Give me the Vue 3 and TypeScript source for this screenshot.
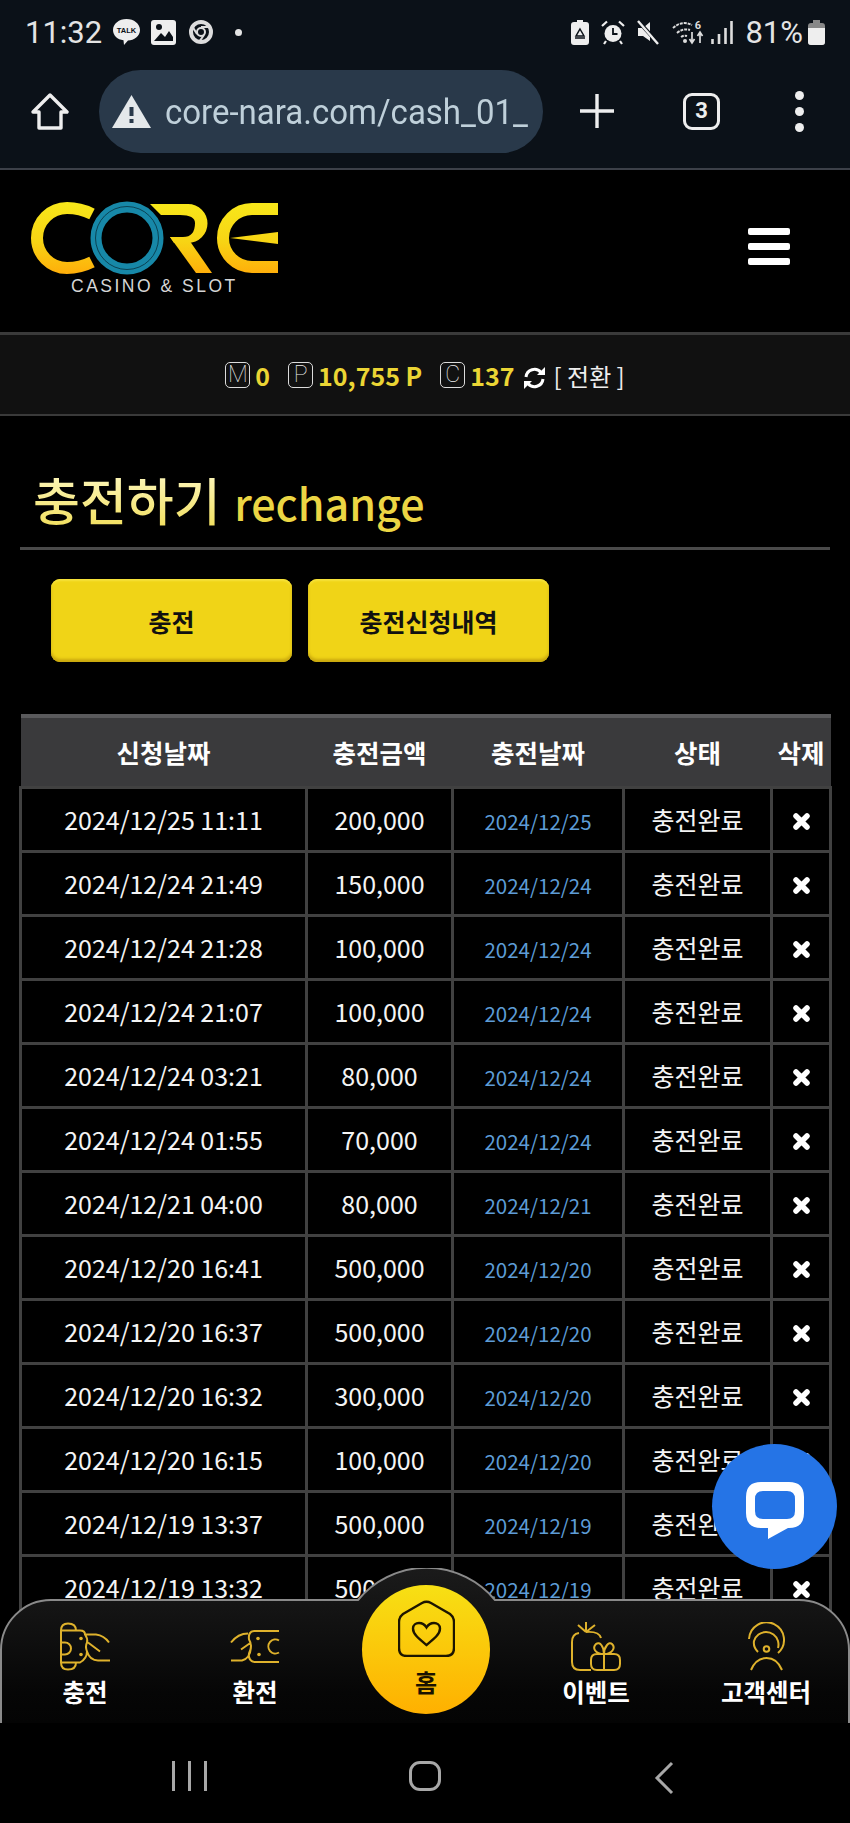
<template>
  <div class="page">
    <!-- phone status bar -->
    <div class="status">
      <span class="time">11:32</span>
      <svg class="st talk" width="29" height="28" viewBox="0 0 29 28">
        <path d="M14.500 1C22 1 28 5.800 28 12C28 18 22 22.500 16 22.500L12 27L11.500 22.300C5.500 21.500 1 17.500 1 12C1 5.800 7 1 14.500 1Z" fill="#eee" />
        <text x="14.500" y="15" text-anchor="middle" class="talk-text">TALK</text>
      </svg>
      <svg class="st pic" width="25" height="25" viewBox="0 0 25 25">
        <rect x="0" y="0" width="25" height="25" rx="3" fill="#eee" />
        <circle cx="8" cy="7" r="3" fill="#0b1118" />
        <path d="M3 21L10 13L14 17L18 11L22 17V21Z" fill="#0b1118" />
      </svg>
      <svg class="st chrome" width="24" height="24" viewBox="0 0 24 24">
        <circle cx="12" cy="12" r="10" fill="none" stroke="#ddd" stroke-width="4" />
        <circle cx="12" cy="12" r="4" fill="none" stroke="#ddd" stroke-width="2" />
        <path d="M12 7H22M8 14L3 6M15 15L10 22" stroke="#ddd" stroke-width="2" />
      </svg>
      <i class="st-dot"></i>
      <span class="st-fill"></span>
      <svg class="st" width="18" height="25" viewBox="0 0 18 25">
        <path d="M6 0H12V2H15Q18 2 18 5V22Q18 25 15 25H3Q0 25 0 22V5Q0 2 3 2H6Z" fill="#eee" />
        <path d="M9 9L13 16H5ZM4 18H14" fill="none" stroke="#0b1118" stroke-width="1.500" />
      </svg>
      <svg class="st gap-r" width="24" height="25" viewBox="0 0 24 25">
        <circle cx="12" cy="13.500" r="8.500" fill="#eee" />
        <path d="M12 8V14H16.500" fill="none" stroke="#0b1118" stroke-width="1.800" />
        <path d="M1 6L6 1.500M23 6L18 1.500M5 21L3 24M19 21L21 24" stroke="#eee" stroke-width="2.200" />
      </svg>
      <svg class="st gap-r" width="23" height="25" viewBox="0 0 23 25">
        <path d="M1 8H6L13 2V21L6 16H1Z" fill="#eee" />
        <path d="M2 2L22 24" stroke="#0b1118" stroke-width="4" />
        <path d="M1 1L21 24" stroke="#eee" stroke-width="2.400" />
      </svg>
      <svg class="st gap-r" width="32" height="25" viewBox="0 0 32 25">
        <path d="M1 8Q10 0 20 5M5 13Q11 8 18 10M9 17Q12 15 15 16" fill="none" stroke="#ddd" stroke-width="2" stroke-dasharray="3 1" />
        <circle cx="13" cy="21" r="2" fill="#ddd" />
        <text x="26" y="9" text-anchor="middle" class="wifi-six">6</text>
        <path d="M20 12V22M17.500 19L20 23L22.500 19M28 23V13M25.500 16L28 12L30.500 16" fill="none" stroke="#ddd" stroke-width="1.700" />
      </svg>
      <svg class="st gap-s" width="22" height="25" viewBox="0 0 22 25">
        <path d="M1.500 19V24M8 14V24M14.500 8V24M20.500 1V24" stroke="#ddd" stroke-width="2.600" />
      </svg>
      <span class="pct">81%</span>
      <svg class="st" width="17" height="25" viewBox="0 0 17 25">
        <path d="M5 0H12V3H14Q17 3 17 6V22Q17 25 14 25H3Q0 25 0 22V6Q0 3 3 3H5Z" fill="#888" />
        <path d="M0 8H17V22Q17 25 14 25H3Q0 25 0 22Z" fill="#eee" />
      </svg>
    </div>

    <!-- browser toolbar -->
    <div class="toolbar">
      <svg class="tb-home" width="38" height="37" viewBox="0 0 38 37">
        <path d="M19 2L36 19H30V35H8V19H2Z" fill="none" stroke="#eee" stroke-width="3.400" stroke-linejoin="round" />
      </svg>
      <div class="pill">
        <svg width="39" height="33" viewBox="0 0 39 33">
          <path d="M19.500 0L39 33H0Z" fill="#e4e8ea" />
          <rect x="17.500" y="12" width="4" height="9" fill="#29394a" />
          <rect x="17.500" y="24" width="4" height="4" fill="#29394a" />
        </svg>
        <span class="url">core-nara.com/cash_01_</span>
      </div>
      <svg class="tb-plus" width="34" height="34" viewBox="0 0 34 34">
        <path d="M17 0V34M0 17H34" stroke="#eee" stroke-width="3.400" />
      </svg>
      <div class="tabs">3</div>
      <div class="dots"><i></i><i></i><i></i></div>
    </div>

    <!-- site header -->
    <header class="site-head">
      <div class="logo">
        <svg width="280" height="90" viewBox="0 0 280 90">
          <defs>
            <linearGradient id="logoGold" gradientUnits="userSpaceOnUse" x1="0" y1="12" x2="0" y2="84">
              <stop offset="0" stop-color="#f8e81a" />
              <stop offset="0.550" stop-color="#f7d414" />
              <stop offset="1" stop-color="#ffae0a" />
            </linearGradient>
          </defs>
          <path d="M72 24C64 20 58 18 47 18A30 30 0 0 0 47 78C58 78 64 76 72 72" fill="none" stroke="url(#logoGold)" stroke-width="12" />
          <circle cx="107" cy="48" r="37.500" fill="#000" />
          <circle cx="107" cy="48" r="31" fill="none" stroke="#1788a8" stroke-width="11" />
          <circle cx="107" cy="48" r="31.500" fill="none" stroke="#07303e" stroke-width="0.800" />
          <path d="M130 14H168A19 19 0 0 1 168 53H154L150 47H163Q175 47 175 33Q175 25 160 25H141Z" fill="url(#logoGold)" />
          <path d="M150 47H167L192 83H176Z" fill="url(#logoGold)" />
          <path d="M258 19H232A29 29 0 0 0 232 77H258" fill="none" stroke="url(#logoGold)" stroke-width="12" />
          <path d="M210 48L258 42V54Z" fill="url(#logoGold)" />
        </svg>
        <div class="logo-sub">CASINO &amp; SLOT</div>
      </div>
      <div class="burger"><i></i><i></i><i></i></div>
    </header>

    <!-- balance bar -->
    <div class="balance">
      <span class="badge">M</span><b class="amt">0</b>
      <span class="badge sep">P</span><b class="amt">10,755 P</b>
      <span class="badge sep">C</span><b class="amt">137</b>
      <svg class="refresh" width="23" height="22" viewBox="0 0 23 22">
        <path d="M3 10A8.500 8.500 0 0 1 18 5.500" fill="none" stroke="#fff" stroke-width="3" />
        <path d="M14 8H22V0Z" fill="#fff" />
        <path d="M20 12A8.500 8.500 0 0 1 5 16.500" fill="none" stroke="#fff" stroke-width="3" />
        <path d="M9 14H1V22Z" fill="#fff" />
      </svg>
      <span class="switch">[ 전환 ]</span>
    </div>

    <main class="content">
      <h1 class="title"><span class="title-ko">충전하기</span> <span class="title-en">rechange</span></h1>

      <div class="btns">
        <button class="btn">충전</button>
        <button class="btn">충전신청내역</button>
      </div>

      <table class="list">
        <colgroup>
          <col style="width: 286px" />
          <col style="width: 146px" />
          <col style="width: 171px" />
          <col style="width: 148px" />
          <col style="width: 59px" />
        </colgroup>
        <thead>
          <tr>
            <th>신청날짜</th>
            <th>충전금액</th>
            <th>충전날짜</th>
            <th>상태</th>
            <th>삭제</th>
          </tr>
        </thead>
        <tbody>
          <tr v-for="row in rows" :key="row.req">
            <td>{{ row.req }}</td>
            <td>{{ row.amount }}</td>
            <td class="done-date">{{ row.req.slice(0, 10) }}</td>
            <td>충전완료</td>
            <td>
              <svg class="del" width="17" height="17" viewBox="0 0 17 17">
                <path d="M3 3L14 14M14 3L3 14" stroke="#fff" stroke-width="5.500" stroke-linecap="round" />
              </svg>
            </td>
          </tr>
        </tbody>
      </table>
    </main>

    <!-- floating chat -->
    <div class="chat">
      <svg width="58" height="57" viewBox="0 0 58 57">
        <path fill-rule="evenodd" fill="#fff" d="M15 0H43Q58 0 58 15V31Q58 46 43 46H42L22 57V46H15Q0 46 0 31V15Q0 0 15 0ZM17 9Q9 9 9 17V29Q9 37 17 37H41Q49 37 49 29V17Q49 9 41 9Z" />
      </svg>
    </div>

    <!-- bottom tab bar -->
    <nav class="tabbar">
      <svg class="tab-shape" width="850" height="155" viewBox="0 0 850 155">
        <defs>
          <linearGradient id="tabBg" x1="0" y1="0" x2="0" y2="1">
            <stop offset="0" stop-color="#1b1b1b" />
            <stop offset="0.800" stop-color="#060606" />
            <stop offset="1" stop-color="#040404" />
          </linearGradient>
        </defs>
        <path d="M1 155V82A50 50 0 0 1 51 32H358A89 89 0 0 1 495 32H799A50 50 0 0 1 849 82V155" fill="url(#tabBg)" stroke="#8a8a8a" stroke-width="2" />
      </svg>

      <a class="tab t1">
        <svg width="50" height="48" viewBox="0 0 50 48">
          <path d="M1 8Q1 1 8 1Q16 1 16 8M1 40Q1 47 8 47Q16 47 16 40M1 8V40M1 8H20Q25 8 25 12Q28 16 27 20Q25 24 27 29Q27 36 20 40H1M25 12H36Q44 13 49 20M28 20L40 29M27 29Q30 38 38 38H50M2 20H5A6 6 0 0 1 5 32H2" fill="none" stroke="#dfb22c" stroke-width="2" />
          <circle cx="21" cy="16" r="1.800" fill="#dfb22c" />
          <circle cx="21" cy="32" r="1.800" fill="#dfb22c" />
        </svg>
        <span>충전</span>
      </a>
      <a class="tab t2">
        <svg width="50" height="34" viewBox="0 0 50 34">
          <path d="M24 1.500H49M24 32.500H49M1 13Q8 4 18 4M1 31H12Q20 29 21 18M11 20L21 13M24 1.500Q18 2 19 10Q23 16 19 24Q18 31 24 32.500M49 11A7 7 0 1 0 49 23" fill="none" stroke="#dfb22c" stroke-width="2" />
          <circle cx="28" cy="9" r="1.800" fill="#dfb22c" />
          <circle cx="29" cy="25" r="1.800" fill="#dfb22c" />
        </svg>
        <span>환전</span>
      </a>

      <a class="home-btn">
        <svg width="57" height="57" viewBox="0 0 57 57">
          <path d="M24 3Q28.500 0.500 33 3L52 14Q56 17 56 22V48Q56 56 48 56H9Q1 56 1 48V22Q1 17 5 14Z" fill="none" stroke="#1d1500" stroke-width="2.400" />
          <path d="M28.500 45C20 38 15 34 15 28.500C15 25 18 23 21 23C24.500 23 27 25 28.500 27.500C30 25 32.500 23 36 23C39 23 42 25 42 28.500C42 34 37 38 28.500 45Z" fill="none" stroke="#1d1500" stroke-width="2.400" />
        </svg>
        <span>홈</span>
      </a>

      <a class="tab t3">
        <svg width="50" height="49" viewBox="0 0 50 49">
          <path d="M7 3L15 10M15 0V10M24 3L15 10M15 10Q28 9 30 16M8 11Q1 12 1 20V40Q1 48 9 48H20M26 32H43Q49 32 49 38V42Q49 48 43 48H26Q20 48 20 42V38Q20 32 26 32ZM33 32V48M33 32C24 32 21 26 25 22C29 19 33 25 33 32C33 25 38 19 41 22C45 26 41 32 33 32Z" fill="none" stroke="#dfb22c" stroke-width="2" />
        </svg>
        <span>이벤트</span>
      </a>
      <a class="tab t4">
        <svg width="37" height="49" viewBox="0 0 37 49">
          <path d="M1 17A17.500 17.500 0 1 1 30 31M10 30Q5 25 6 19A12.500 12.500 0 0 1 30 19Q31 23 30 26M3 48Q8 36 18.500 36Q29 36 34 48" fill="none" stroke="#dfb22c" stroke-width="2" />
          <circle cx="18.500" cy="27" r="2.800" fill="none" stroke="#dfb22c" stroke-width="2" />
        </svg>
        <span>고객센터</span>
      </a>
    </nav>

    <!-- android nav keys -->
    <div class="keys">
      <div class="key-recent"><i></i><i></i><i></i></div>
      <div class="key-home"></div>
      <svg width="20" height="34" viewBox="0 0 20 34">
        <path d="M18 2L3 17L18 32" fill="none" stroke="#a8a8a8" stroke-width="3" />
      </svg>
    </div>
  </div>
</template>

<script setup lang="ts">
interface Row {
  req: string
  amount: string
}

const rows: Row[] = [
  { req: '2024/12/25 11:11', amount: '200,000' },
  { req: '2024/12/24 21:49', amount: '150,000' },
  { req: '2024/12/24 21:28', amount: '100,000' },
  { req: '2024/12/24 21:07', amount: '100,000' },
  { req: '2024/12/24 03:21', amount: '80,000' },
  { req: '2024/12/24 01:55', amount: '70,000' },
  { req: '2024/12/21 04:00', amount: '80,000' },
  { req: '2024/12/20 16:41', amount: '500,000' },
  { req: '2024/12/20 16:37', amount: '500,000' },
  { req: '2024/12/20 16:32', amount: '300,000' },
  { req: '2024/12/20 16:15', amount: '100,000' },
  { req: '2024/12/19 13:37', amount: '500,000' },
  { req: '2024/12/19 13:32', amount: '500,000' },
]
</script>

<style>
body {
  margin: 0;
  background: #000;
}
</style>

<style scoped>
.page {
  position: relative;
  width: 850px;
  height: 1823px;
  overflow: hidden;
  background: #000;
  color: #fff;
  font-family: 'Noto Sans CJK KR', 'Noto Sans', sans-serif;
}

/* status bar */
.status {
  display: flex;
  align-items: center;
  height: 64px;
  padding: 0 25px 0 25px;
  box-sizing: border-box;
  background: #0b1118;
  color: #e4e4e4;
  font-family: Roboto, sans-serif;
}
.time {
  font-size: 31px;
  width: 87px;
}
.talk-text {
  font: bold 7.500px 'Liberation Sans', sans-serif;
  fill: #0b1118;
}
.wifi-six {
  font: bold 11px Roboto, sans-serif;
  fill: #ddd;
}
.st {
  flex: none;
}
.talk {
  margin-right: 10px;
}
.pic {
  margin-right: 13px;
}
.chrome {
  margin-right: 22px;
}
.st-dot {
  width: 7px;
  height: 7px;
  border-radius: 50%;
  background: #e4e4e4;
}
.st-fill {
  flex: 1;
}
.gap-r {
  margin-left: 12px;
}
.gap-s {
  margin-left: 7px;
}
.pct {
  font-size: 31px;
  margin: 0 5px 0 12px;
}

/* browser toolbar */
.toolbar {
  display: flex;
  align-items: center;
  height: 106px;
  padding: 0 0 10px 31px;
  box-sizing: border-box;
  background: #0b1118;
  border-bottom: 2px solid #3c4048;
}
.tb-home {
  margin-right: 30px;
}
.pill {
  display: flex;
  align-items: center;
  gap: 14px;
  width: 444px;
  height: 83px;
  padding-left: 13px;
  box-sizing: border-box;
  border-radius: 42px;
  background: #29394a;
}
.url {
  font: 33px Roboto, sans-serif;
  color: #bfd0da;
  white-space: nowrap;
  transform: scaleY(1.08);
}
.tb-plus {
  margin-left: 37px;
}
.tabs {
  width: 37px;
  height: 37px;
  margin-left: 69px;
  box-sizing: border-box;
  border: 3.500px solid #eee;
  border-radius: 9px;
  text-align: center;
  font: bold 22px/30px Roboto, sans-serif;
  color: #eee;
}
.dots {
  display: flex;
  flex-direction: column;
  gap: 7px;
  margin-left: 75px;
}
.dots i {
  width: 9px;
  height: 9px;
  border-radius: 50%;
  background: #eee;
}

/* site header */
.site-head {
  display: flex;
  justify-content: space-between;
  align-items: flex-start;
  height: 162px;
  padding: 20px 60px 0 20px;
  box-sizing: border-box;
}
.logo {
  position: relative;
  height: 120px;
}
.logo-sub {
  margin-top: -9px;
  padding-left: 51px;
  font: 17.500px 'Liberation Sans', sans-serif;
  letter-spacing: 2.500px;
  color: #d6d6d6;
}
.burger {
  display: flex;
  flex-direction: column;
  gap: 8px;
  margin-top: 38px;
}
.burger i {
  width: 42px;
  height: 7px;
  border-radius: 2px;
  background: #fff;
}

/* balance */
.balance {
  display: flex;
  align-items: center;
  justify-content: center;
  height: 84px;
  box-sizing: border-box;
  background: #111;
  border-top: 3px solid #3a3a3a;
  border-bottom: 2px solid #3a3a3a;
}
.badge {
  width: 25px;
  height: 26px;
  box-sizing: border-box;
  margin-right: 5px;
  border: 1px solid #dcdcdc;
  border-radius: 5px;
  text-align: center;
  font: 100 23px/24px Roboto, sans-serif;
  color: #eee;
}
.sep {
  margin-left: 18px;
}
.amt {
  font-size: 25px;
  font-weight: 700;
  color: #ebd534;
}
.refresh {
  margin: 6px 8px 0 8px;
}
.switch {
  font-size: 24px;
  color: #eee;
  margin-top: 2px;
}

/* content */
.title {
  margin: 48px 20px 0;
  padding: 0 0 10px 13px;
  border-bottom: 3px solid #4a4a4a;
  font-size: 51px;
  font-weight: 500;
  line-height: 70px;
  white-space: nowrap;
}
.title-ko {
  background: linear-gradient(#fffbd0, #f0dc50);
  -webkit-background-clip: text;
  background-clip: text;
  color: transparent;
}
.title-en {
  margin-left: 2px;
  font-size: 43px;
  color: #ecd644;
}
.btns {
  display: flex;
  gap: 16px;
  margin: 29px 0 0 51px;
}
.btn {
  width: 241px;
  height: 83px;
  padding: 0;
  border: 0;
  border-radius: 9px;
  background: #f0d417;
  box-shadow: inset 0 -3px 3px #c9a80f, inset 0 2px 2px #f6e23c;
  font-family: inherit;
  font-size: 25px;
  font-weight: 700;
  color: #111;
}
.list {
  width: 810px;
  margin: 52px 0 0 19px;
  border-collapse: collapse;
  table-layout: fixed;
}
.list th {
  height: 71px;
  padding: 0;
  background: #3a3a3c;
  border-top: 4px solid #5a5a5c;
  font-size: 25.500px;
  font-weight: 700;
  box-sizing: border-box;
}
.list td {
  height: 64px;
  padding: 0;
  border: 3px solid #414141;
  box-sizing: border-box;
  text-align: center;
  font-size: 25px;
  color: #f4f4f4;
}
.list .done-date {
  padding-top: 4px;
  font-size: 20.500px;
  color: #5d9cd6;
}
.del {
  display: block;
  margin: 5px auto 0;
}

/* chat bubble */
.chat {
  position: absolute;
  left: 712px;
  top: 1444px;
  display: flex;
  align-items: center;
  justify-content: center;
  width: 125px;
  height: 125px;
  border-radius: 50%;
  background: #2574e6;
  z-index: 3;
}
.chat svg {
  margin-top: 8px;
}

/* bottom tabs */
.tabbar {
  position: absolute;
  left: 0;
  right: 0;
  top: 1568px;
  height: 155px;
  z-index: 2;
}
.tab-shape {
  position: absolute;
  left: 0;
  top: 0;
}
.tab {
  position: absolute;
  top: 54px;
  display: flex;
  flex-direction: column;
  align-items: center;
  width: 120px;
  height: 100px;
  font-size: 24.500px;
  font-weight: 700;
  color: #fff;
}
.tab svg {
  height: 49px;
}
.tab span {
  margin-top: 3px;
  line-height: 36px;
}
.t1 {
  left: 25px;
}
.t2 {
  left: 195px;
}
.t3 {
  left: 536px;
}
.t4 {
  left: 706px;
}
.home-btn {
  position: absolute;
  left: 362px;
  top: 17px;
  display: flex;
  flex-direction: column;
  align-items: center;
  width: 128px;
  height: 129px;
  padding-top: 15px;
  box-sizing: border-box;
  border-radius: 50%;
  background: linear-gradient(#f7e014, #ffb000);
  color: #1a1200;
  font-size: 24px;
  font-weight: 700;
}
.home-btn span {
  line-height: 34px;
  margin-top: 8px;
}

/* android keys */
.keys {
  position: absolute;
  left: 0;
  right: 0;
  bottom: 0;
  height: 100px;
  background: #000;
}
.keys > * {
  position: absolute;
  top: 38px;
}
.key-recent {
  left: 172px;
  display: flex;
  gap: 13px;
}
.key-recent i {
  width: 3px;
  height: 30px;
  background: #a8a8a8;
}
.key-home {
  left: 409px;
  width: 32px;
  height: 30px;
  border: 3.500px solid #a8a8a8;
  border-radius: 11px;
  box-sizing: border-box;
}
.keys svg {
  left: 654px;
}
</style>
